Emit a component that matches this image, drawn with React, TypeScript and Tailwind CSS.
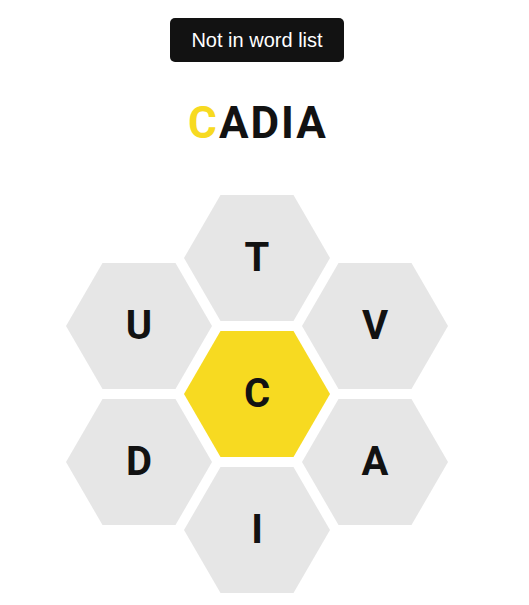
import React from "react";

const Hex = ({ letter, center = false }: { letter: string; center?: boolean }) => (
  <div
    className={`w-[146px] h-[126px] flex items-center justify-center [clip-path:polygon(25%_0,75%_0,100%_50%,75%_100%,25%_100%,0_50%)] ${
      center ? "bg-[#f7da21]" : "bg-[#e6e6e6]"
    }`}
  >
    <span className="text-[40px] leading-none font-bold text-[#121212] font-['Roboto',Arial,sans-serif]">{letter}</span>
  </div>
);

export default function App() {
  return (
    <div className="w-[514px] min-h-[605px] bg-white flex flex-col items-center font-['Liberation_Sans',Arial,sans-serif]">
      <div className="mt-[18px] h-[44px] px-[21px] flex items-center bg-[#121212] rounded-[5px] text-white text-[20px] leading-none">
        Not in word list
      </div>
      <div className="mt-[39px] pl-[2px] text-[44px] leading-[44px] font-bold tracking-[2px] text-[#121212] font-['Roboto',Arial,sans-serif]">
        <span className="text-[#f7da21]">C</span>ADIA
      </div>
      <div className="mt-[50px] flex items-start">
        <div className="mt-[68px] flex flex-col gap-[10px]">
          <Hex letter="U" />
          <Hex letter="D" />
        </div>
        <div className="-mx-[28px] flex flex-col gap-[10px]">
          <Hex letter="T" />
          <Hex letter="C" center />
          <Hex letter="I" />
        </div>
        <div className="mt-[68px] flex flex-col gap-[10px]">
          <Hex letter="V" />
          <Hex letter="A" />
        </div>
      </div>
    </div>
  );
}
